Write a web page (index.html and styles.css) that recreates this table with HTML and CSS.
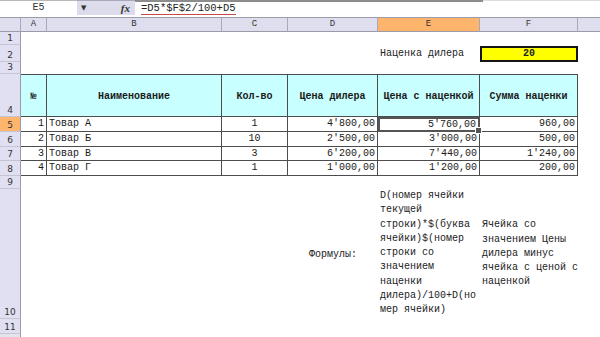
FILE: index.html
```html
<!DOCTYPE html>
<html>
<head>
<meta charset="utf-8">
<link rel="stylesheet" href="styles.css">
</head>
<body>
<div class="fbar">
  <div class="namebox">E5</div>
  <div class="fbtns"><span class="arrow">&#9660;</span><span class="fx">fx</span></div>
  <div class="finput"><span class="ftext">=D5*$F$2/100+D5</span></div>
  <div class="frest"></div>
</div>
<div class="sheet">
  <div class="ch corner"></div>
  <div class="ch">A</div>
  <div class="ch">B</div>
  <div class="ch">C</div>
  <div class="ch">D</div>
  <div class="ch active">E</div>
  <div class="ch">F</div>
  <div class="ch last"></div>

  <div class="rh">1</div><div class="blank s7"></div>

  <div class="rh">2</div><div class="blank s4"></div>
  <div class="label">Наценка дилера</div>
  <div class="markup">20</div>
  <div class="blank"></div>

  <div class="rh">3</div><div class="blank s7"></div>

  <div class="rh">4</div>
  <div class="t th">№</div>
  <div class="t th">Наименование</div>
  <div class="t th">Кол-во</div>
  <div class="t th">Цена дилера</div>
  <div class="t th">Цена с наценкой</div>
  <div class="t th">Сумма наценки</div>
  <div class="blank"></div>

  <div class="rh cur">5</div>
  <div class="t r">1</div><div class="t l">Товар А</div><div class="t c">1</div>
  <div class="t r">4'800,00</div><div class="t r sel">5'760,00</div><div class="t r">960,00</div>
  <div class="blank"></div>

  <div class="rh">6</div>
  <div class="t r">2</div><div class="t l">Товар Б</div><div class="t c">10</div>
  <div class="t r">2'500,00</div><div class="t r">3'000,00</div><div class="t r">500,00</div>
  <div class="blank"></div>

  <div class="rh">7</div>
  <div class="t r">3</div><div class="t l">Товар В</div><div class="t c">3</div>
  <div class="t r">6'200,00</div><div class="t r">7'440,00</div><div class="t r">1'240,00</div>
  <div class="blank"></div>

  <div class="rh">8</div>
  <div class="t r">4</div><div class="t l">Товар Г</div><div class="t c">1</div>
  <div class="t r">1'000,00</div><div class="t r">1'200,00</div><div class="t r">200,00</div>
  <div class="blank"></div>

  <div class="rh">9</div><div class="blank s7"></div>

  <div class="rh">10</div>
  <div class="blank s3"></div>
  <div class="flabel">Формулы:</div>
  <div class="wrap">D(номер ячейки<br>текущей<br>строки)*$(буква<br>ячейки)$(номер<br>строки со<br>значением<br>наценки<br>дилера)/100+D(но<br>мер ячейки)</div>
  <div class="wrap2">Ячейка со<br>значением Цены<br>дилера минус<br>ячейка с ценой с<br>наценкой</div>
  <div class="blank"></div>

  <div class="rh">11</div><div class="blank s7"></div>

  <div class="rh end"></div><div class="blank s7"></div>
</div>
</body>
</html>
```

FILE: styles.css
```css
* { box-sizing: border-box; }
html, body {
  margin: 0;
  padding: 0;
  background: #ffffff;
  width: 600px;
  height: 337px;
  overflow: hidden;
  font-family: "Liberation Mono", monospace;
  font-size: 10px;
  color: #1a1a1a;
}

.fbar {
  display: flex;
  height: 17px;
  padding-bottom: 2px;
}
.namebox {
  width: 77px;
  border-top: 1px solid #b8b8b8;
  text-align: center;
  font-size: 10px;
  line-height: 14px;
  color: #333;
}
.fbtns {
  width: 58px;
  background: #dcdcec;
  border-top: 1px solid #a8a8b8;
  display: flex;
  align-items: center;
  justify-content: space-between;
  padding: 0 5px 0 4px;
}
.arrow {
  font-family: "DejaVu Sans", sans-serif;
  font-size: 7px;
  color: #333;
}
.fx {
  font-family: "Liberation Serif", serif;
  font-style: italic;
  font-weight: bold;
  font-size: 11px;
  color: #333;
}
.finput {
  width: 348px;
  border-top: 2px solid #8c8c8c;
  padding-left: 6px;
  line-height: 12px;
}
.ftext {
  font-size: 10.5px;
  display: inline-block;
  border-bottom: 1px solid #c44a4a;
  line-height: 12px;
  color: #222;
}
.frest {
  flex: 1;
  border-top: 1px solid #dcdcdc;
}

.sheet {
  display: grid;
  grid-template-columns: 21px 26px 175px 66px 90px 102px 98px 1fr;
  grid-template-rows: 15px 13px 17px 12px 43px 15px 15px 14px 15px 13px 130px 15px 1fr;
  height: 320px;
}

.ch {
  background: #dedeef;
  border-top: 1px solid #9c9cab;
  border-bottom: 1px solid #9a9aa8;
  border-right: 1px solid #a8a8b8;
  text-align: center;
  font-family: "Liberation Mono", monospace;
  font-size: 9px;
  line-height: 13px;
  color: #333;
}
.ch.active { background: #fdb46c; }
.ch.last { border-right: none; }

.rh {
  background: #e0e0f2;
  border-right: 1px solid #9a9aa8;
  border-bottom: 1px solid #c4c4d2;
  font-family: "DejaVu Sans", sans-serif;
  font-size: 9px;
  color: #333;
  display: flex;
  align-items: flex-end;
  justify-content: center;
  line-height: 12px;
}
.rh.cur { background: #fdb46c; }
.rh.end { border-bottom: none; background: #e4e4ee; }

.blank { background: #fff; }
.s3 { grid-column: span 3; }
.s4 { grid-column: span 4; }
.s7 { grid-column: span 7; }

.label {
  display: flex;
  align-items: center;
  padding-left: 2px;
  color: #222;
}
.markup {
  background: #ffff00;
  border: 2px solid #151515;
  margin-top: 1px;
  font-weight: bold;
  text-align: center;
  line-height: 12px;
  color: #222;
}

.t {
  border-right: 1px solid #4c4c4c;
  border-bottom: 1px solid #4c4c4c;
  line-height: 14px;
  white-space: nowrap;
}
.th {
  background: #c8ffff;
  border-top: 1px solid #4c4c4c;
  font-weight: bold;
  display: flex;
  align-items: center;
  justify-content: center;
  padding-top: 2px;
}
.r { text-align: right; padding-right: 2px; }
.l { text-align: left; padding-left: 2px; }
.c { text-align: center; }

.sel {
  position: relative;
  border: 2px solid #555;
  line-height: 11px;
}
.sel::after {
  content: "";
  position: absolute;
  right: -4px;
  bottom: -4px;
  width: 5px;
  height: 5px;
  background: #555;
  border: 1px solid #fff;
}

.flabel {
  display: flex;
  align-items: center;
  justify-content: center;
  color: #222;
}
.wrap {
  padding: 0 0 0 2px;
  line-height: 14.3px;
  color: #222;
  white-space: nowrap;
}
.wrap2 {
  display: flex;
  flex-direction: column;
  justify-content: center;
  padding: 0 0 0 2px;
  line-height: 14.3px;
  color: #222;
  white-space: nowrap;
}
```
